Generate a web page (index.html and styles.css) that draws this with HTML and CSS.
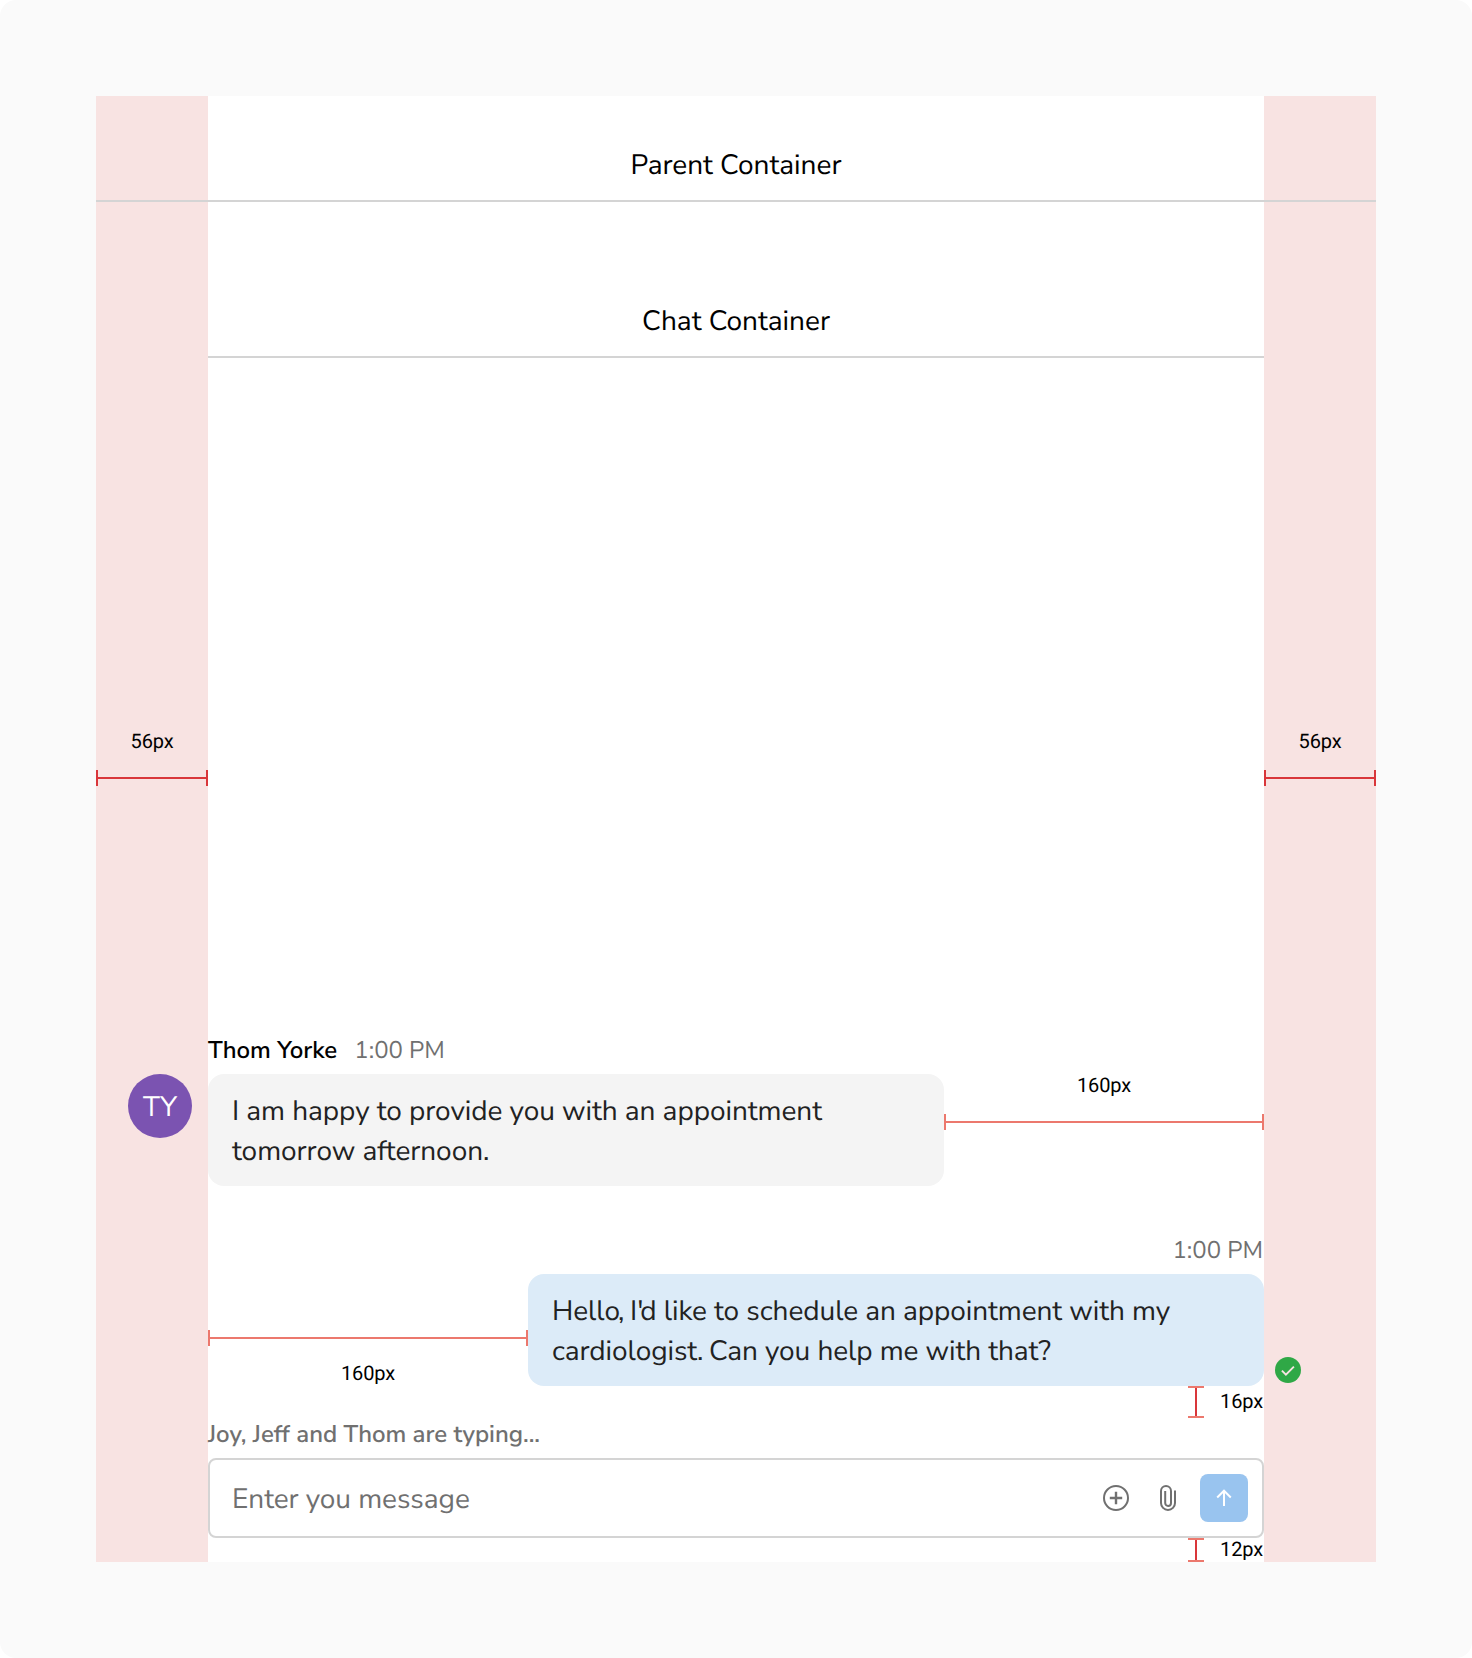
FILE: index.html
```html
<!DOCTYPE html>
<html lang="en">
<head>
<meta charset="utf-8">
<title>Chat layout spacing</title>
<link rel="stylesheet" href="styles.css">
</head>
<body>
<main class="canvas">
  <div class="frame">
    <aside class="gutter gutter-left">
      <span class="label">56px</span>
      <div class="measure strong"></div>
    </aside>
    <aside class="gutter gutter-right">
      <span class="label">56px</span>
      <div class="measure strong"></div>
    </aside>
    <header class="parent-title"><span>Parent Container</span></header>
    <section class="chat">
      <header class="chat-title"><span>Chat Container</span></header>
      <article class="message">
        <div class="meta"><span class="name">Thom Yorke</span><span class="time">1:00 PM</span></div>
        <div class="row">
          <div class="avatar"><span>TY</span></div>
          <p class="bubble incoming">I am happy to provide you with an appointment<br>tomorrow afternoon.</p>
          <div class="span-note above">
            <span class="label">160px</span>
            <div class="measure"></div>
          </div>
        </div>
      </article>
      <article class="message reply">
        <div class="meta end"><span class="time">1:00 PM</span></div>
        <div class="row">
          <div class="span-note below">
            <div class="measure"></div>
            <span class="label">160px</span>
          </div>
          <p class="bubble outgoing">Hell<span class="kern-comma">o,</span> I<span class="kern-quote">'</span>d like to schedule an appointment with my<br>cardiologist<span class="kern-stop">.</span> Can you help me with that?</p>
          <svg class="sent" width="26" height="26" viewBox="0 0 26 26"><circle cx="13" cy="13" r="13" fill="#2fa846"/><path d="M6.9 13.7l4 4 8-8.1" fill="none" stroke="#f8e3e2" stroke-width="1.9"/></svg>
        </div>
      </article>
      <div class="gap-note gap-16"><div class="vmeasure"></div><span class="label">16px</span></div>
      <div class="typing"><span>Joy, Jeff and Thom are typing...</span></div>
      <div class="composer">
        <span class="placeholder">Enter you message</span>
        <svg class="plus" width="26" height="26" viewBox="0 0 26 26" fill="none" stroke="#707070" stroke-width="2"><circle cx="13" cy="13" r="12"/><path d="M13 6.8v12.4M6.8 13h12.4" stroke-width="2.4"/></svg>
        <svg class="clip" width="16" height="26" viewBox="0 0 16 26" fill="none" stroke="#707070" stroke-width="2"><path d="M15 5.5v12.4a7 7 0 0 1-14 0V6a5 5 0 0 1 10 0v12a2.9 2.9 0 0 1-5.8 0V6"/></svg>
        <button class="send" aria-label="Send"><svg width="16" height="18" viewBox="0 0 16 18" fill="none" stroke="#fff" stroke-width="2"><path d="M8 17V2M1.2 8.5L8 1.7l6.8 6.8"/></svg></button>
      </div>
      <div class="gap-note gap-12"><div class="vmeasure"></div><span class="label">12px</span></div>
    </section>
  </div>
</main>
</body>
</html>
```
FILE: styles.css
```css
* { box-sizing: border-box; }
body {
  margin: 0;
  background: #fff;
  font-family: "Nunito Sans", Nunito, Lato, sans-serif;
  font-size: 28px;
  line-height: 40px;
  color: #000;
  text-rendering: geometricPrecision;
}
span { white-space: nowrap; }
p { margin: 0; }
.canvas {
  width: 1472px;
  height: 1658px;
  padding: 96px;
  background: #fafafa;
  border-radius: 16px;
}
.frame {
  display: grid;
  grid-template: 106px 1360px / 112px 1056px 112px;
  background: #fff;
}
.gutter {
  grid-row: 1 / 3;
  display: flex;
  flex-direction: column;
  align-items: center;
  padding-top: 633px;
  gap: 17px;
  background: #f8e3e2;
}
.gutter-left { grid-column: 1; }
.gutter-right { grid-column: 3; }
.parent-title {
  grid-area: 1 / 1 / 2 / 4;
  padding-top: 49px;
  border-bottom: 2px solid #d4d4d4;
  text-align: center;
}
.chat { grid-area: 2 / 2 / 3 / 3; display: flex; flex-direction: column; }
.chat-title {
  height: 156px;
  padding-top: 99px;
  border-bottom: 2px solid #d4d4d4;
  text-align: center;
}

.label {
  font: 20px/24px Roboto, sans-serif;
  letter-spacing: -0.15px;
  color: #000;
}
.measure {
  width: 100%;
  height: 16px;
  border: solid #ec786d;
  border-width: 0 2px;
  background: linear-gradient(#ec786d, #ec786d) 0 7px / 100% 2px no-repeat;
}
.measure.strong {
  border-color: #d9363a;
  background-image: linear-gradient(#d9363a, #d9363a);
}
.vmeasure {
  width: 16px;
  border: solid #ec786d;
  border-width: 2px 0;
  background: linear-gradient(#d9363a, #d9363a) 7px 0 / 2px 100% no-repeat;
}

.message { margin-top: 673px; }
.message.reply { margin-top: 45px; }
.meta {
  display: flex;
  gap: 17px;
  height: 43px;
  font-size: 24px;
  line-height: 40px;
}
.end { justify-content: flex-end; padding-right: 1px; }
.name { font-weight: 600; }
.time { color: #707070; }
.row { display: flex; position: relative; height: 112px; }
.avatar {
  position: absolute;
  left: -80px;
  top: 0;
  width: 64px;
  height: 64px;
  border-radius: 50%;
  background: #7b53b1;
  color: #fff;
  line-height: 66px;
  text-align: center;
}
.bubble {
  width: 736px;
  padding: 17px 24px 15px;
  border-radius: 16px;
  color: #222;
  letter-spacing: -0.04px;
  font-variant-ligatures: common-ligatures;
}
.kern-comma { letter-spacing: -1.5px; }
.kern-quote { letter-spacing: -3px; }
.kern-stop { letter-spacing: -1.6px; }
.incoming { background: #f4f4f4; }
.outgoing { background: #dcebf8; letter-spacing: -0.06px; }
.span-note {
  width: 320px;
  display: flex;
  flex-direction: column;
  align-items: center;
}
.above { gap: 17px; }
.above .label { margin-top: -1px; }
.below { padding-top: 56px; gap: 15px; }
.sent { position: absolute; left: 1067px; top: 83px; }

.gap-note { display: flex; justify-content: flex-end; gap: 16px; }
.gap-note .label { width: 44px; padding-right: 1px; text-align: right; }
.gap-16 { height: 32px; }
.gap-16 .label { padding-top: 3px; }
.gap-12 { height: 24px; }
.gap-12 .label { margin-top: -1px; }
.typing {
  height: 40px;
  padding-top: 1px;
  font-size: 24px;
  line-height: 32px;
  font-weight: 600;
  color: #707070;
}
.composer {
  display: flex;
  align-items: center;
  height: 80px;
  padding: 0 14px 0 22px;
  border: 2px solid #d4d4d4;
  border-radius: 8px;
  color: #707070;
}
.placeholder { flex: 1; padding-top: 2px; letter-spacing: -0.05px; }
.plus { margin-right: 31px; }
.clip { margin-right: 24px; }
.send {
  display: flex;
  align-items: center;
  justify-content: center;
  width: 48px;
  height: 48px;
  padding: 0;
  border: 0;
  border-radius: 8px;
  background: #99c4ef;
}
```
